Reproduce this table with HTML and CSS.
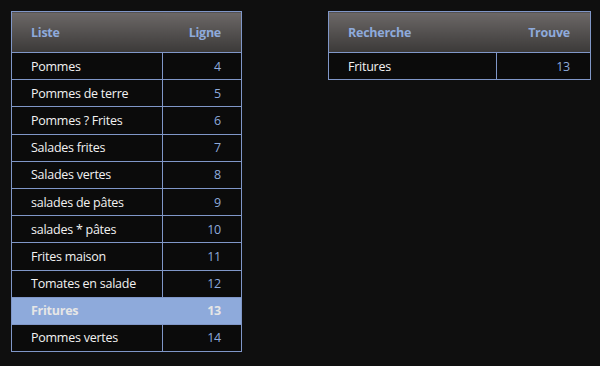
FILE: index.html
```html
<!DOCTYPE html>
<html lang="fr">
<head>
<meta charset="utf-8">
<title>Liste et recherche</title>
<link rel="stylesheet" href="styles.css">
</head>
<body>
<div class="sheet">
  <table class="grid list">
    <colgroup><col class="c-label"><col class="c-num"></colgroup>
    <thead>
      <tr><th class="label">Liste</th><th class="num">Ligne</th></tr>
    </thead>
    <tbody>
      <tr><td class="label">Pommes</td><td class="num">4</td></tr>
      <tr><td class="label">Pommes de terre</td><td class="num">5</td></tr>
      <tr><td class="label">Pommes ? Frites</td><td class="num">6</td></tr>
      <tr><td class="label">Salades frites</td><td class="num">7</td></tr>
      <tr><td class="label">Salades vertes</td><td class="num">8</td></tr>
      <tr><td class="label">salades de pâtes</td><td class="num">9</td></tr>
      <tr><td class="label">salades * pâtes</td><td class="num">10</td></tr>
      <tr><td class="label">Frites maison</td><td class="num">11</td></tr>
      <tr><td class="label">Tomates en salade</td><td class="num">12</td></tr>
      <tr class="hit"><td class="label">Fritures</td><td class="num">13</td></tr>
      <tr><td class="label">Pommes vertes</td><td class="num">14</td></tr>
    </tbody>
  </table>

  <table class="grid search">
    <colgroup><col class="c-label"><col class="c-num"></colgroup>
    <thead>
      <tr><th class="label">Recherche</th><th class="num">Trouve</th></tr>
    </thead>
    <tbody>
      <tr><td class="label">Fritures</td><td class="num">13</td></tr>
    </tbody>
  </table>
</div>
</body>
</html>
```

FILE: styles.css
```css
html, body {
  margin: 0;
  padding: 0;
  background: #0f0f0f;
  width: 600px;
  height: 366px;
  overflow: hidden;
}

.sheet {
  display: flex;
  align-items: flex-start;
  gap: 86px;
  padding: 11px 0 0 11px;
  font-family: "Open Sans", "Noto Sans", sans-serif;
  font-size: 12.5px;
  letter-spacing: -0.25px;
}

.grid {
  border-collapse: collapse;
  border: 1px solid #8097c8;
  table-layout: fixed;
}

.grid th,
.grid td {
  border: 1px solid #8097c8;
  padding: 0 20px 0 19px;
  white-space: nowrap;
}

.grid th {
  height: 40px;
  background: linear-gradient(#6c6867, #3b3938);
  color: #8eaadb;
  font-weight: 700;
  border-left: none;
  border-right: none;
}

.grid td {
  height: 26.2px;
  background: #0b0b0b;
  color: #f2f2f2;
}

.grid .label { text-align: left; }
.grid .num { text-align: right; }

.grid td.num { color: #8eaadb; }

.list { width: 230px; }
.list .c-label { width: 151px; }
.list .c-num { width: 79px; }

.search { width: 262px; }
.search .c-label { width: 168px; }
.search .c-num { width: 94px; }

.grid tr.hit td {
  background: #8eaadb;
  color: #e6e6e6;
  font-weight: 700;
  border-left: none;
  border-right: none;
}
.grid tr.hit td:first-child { border-left: 1px solid #8097c8; }
.grid tr.hit td:last-child { border-right: 1px solid #8097c8; }
```
